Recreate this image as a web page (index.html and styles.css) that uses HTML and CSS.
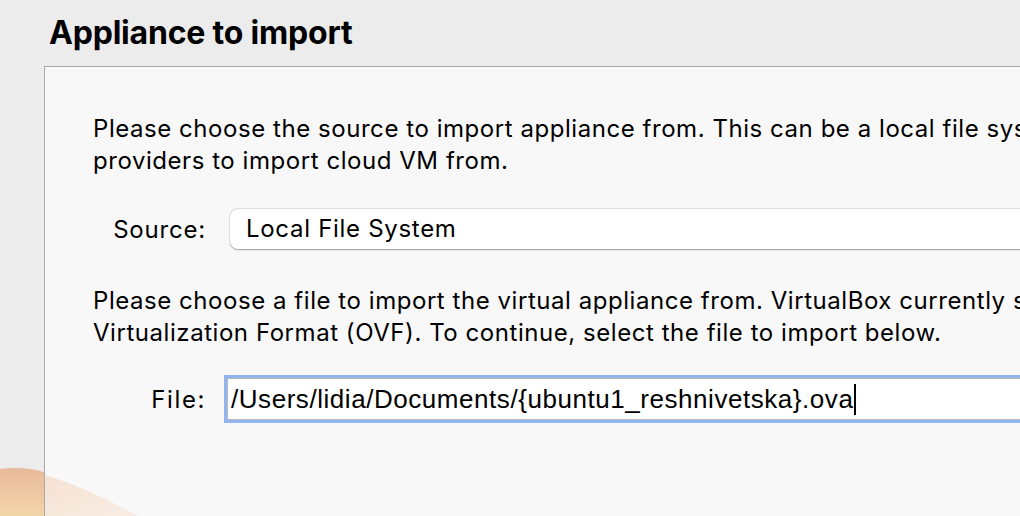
FILE: index.html
```html
<!DOCTYPE html>
<html>
<head>
<meta charset="utf-8">
<link rel="stylesheet" href="styles.css">
</head>
<body>
<div class="window">
  <h1 class="title">Appliance to import</h1>
  <div class="panel">
    <p class="desc">Please choose the source to import appliance from. This can be a local file system to import OVF archive or one of known cloud service<br>providers to import cloud VM from.</p>
    <div class="row row-source">
      <span class="label">Source:</span>
      <div class="combo">Local File System</div>
    </div>
    <p class="desc desc2">Please choose a file to import the virtual appliance from. VirtualBox currently supports importing appliances saved in the Open<br>Virtualization Format (OVF). To continue, select the file to import below.</p>
    <div class="row row-file">
      <span class="label label-file">File:</span>
      <div class="field"><span class="value">/Users/lidia/Documents/{ubuntu1_reshnivetska}.ova</span><span class="caret"></span></div>
    </div>
  </div>
  <svg class="wallpaper" width="420" height="50" viewBox="0 0 420 50">
    <defs>
      <linearGradient id="g1" x1="0" y1="0" x2="0" y2="1">
        <stop offset="0" stop-color="#e8b89b"/>
        <stop offset="1" stop-color="#f3d5aa"/>
      </linearGradient>
      <linearGradient id="g2" x1="0" y1="0" x2="1" y2="1">
        <stop offset="0" stop-color="#f6e1d2"/>
        <stop offset="1" stop-color="#f8ede4"/>
      </linearGradient>
    </defs>
    <path d="M0 50 L0 3 C15 1 30 2 44 6 L44 50 Z" fill="url(#g1)"/>
    <path d="M45 50 L45 9 C75 18 105 32 138 50 Z" fill="url(#g2)"/>
  </svg>
</div>
</body>
</html>
```
FILE: styles.css
```css
html, body {
  margin: 0;
  padding: 0;
  width: 1020px;
  height: 516px;
  overflow: hidden;
  background: #ececec;
}
.window {
  position: relative;
  width: 1020px;
  height: 516px;
  display: flex;
  flex-direction: column;
  font-family: Inter, "Liberation Sans", sans-serif;
  color: #000;
}
.title {
  margin: 0;
  padding: 13px 0 0 49px;
  height: 66px;
  box-sizing: border-box;
  font-size: 32px;
  font-weight: 700;
  line-height: 40px;
  letter-spacing: -0.2px;
  flex: none;
}
.panel {
  flex: 1;
  margin-left: 44px;
  border-top: 1px solid #a9a9a9;
  border-left: 1px solid #a9a9a9;
  background: #f8f8f8;
  padding: 46px 0 0 48px;
  white-space: nowrap;
  overflow: hidden;
}
.desc {
  margin: 0;
  font-size: 24px;
  line-height: 32px;
  letter-spacing: 0.55px;
}
.row {
  display: flex;
  align-items: center;
}
.label {
  width: 113px;
  text-align: right;
  font-size: 24px;
  letter-spacing: 0.8px;
  flex: none;
}
.label-file {
  letter-spacing: 1.6px;
}
.row-source {
  margin-top: 32px;
  gap: 24px;
}
.combo {
  flex: none;
  width: 900px;
  height: 40px;
  box-sizing: border-box;
  background: #fff;
  border-radius: 8px;
  box-shadow: 0 0.5px 1.5px rgba(0,0,0,0.35), 0 0 0 0.5px rgba(0,0,0,0.08);
  font-size: 24px;
  letter-spacing: 0.7px;
  line-height: 40px;
  padding-left: 16px;
}
.desc2 {
  margin-top: 36px;
}
.row-file {
  margin-top: 29px;
  gap: 21px;
}
.field {
  flex: none;
  width: 900px;
  height: 42px;
  box-sizing: border-box;
  background: #fff;
  border: 1px solid #b9b9b9;
  box-shadow: 0 0 0 3px #90b5f1;
  display: flex;
  align-items: center;
  padding-left: 3px;
  font-family: "Liberation Sans", sans-serif;
  font-size: 26px;
  letter-spacing: 0.55px;
}
.caret {
  width: 1.5px;
  height: 31px;
  background: #000;
  margin-left: 1px;
}
.wallpaper {
  position: absolute;
  left: 0;
  bottom: 0;
}
```
